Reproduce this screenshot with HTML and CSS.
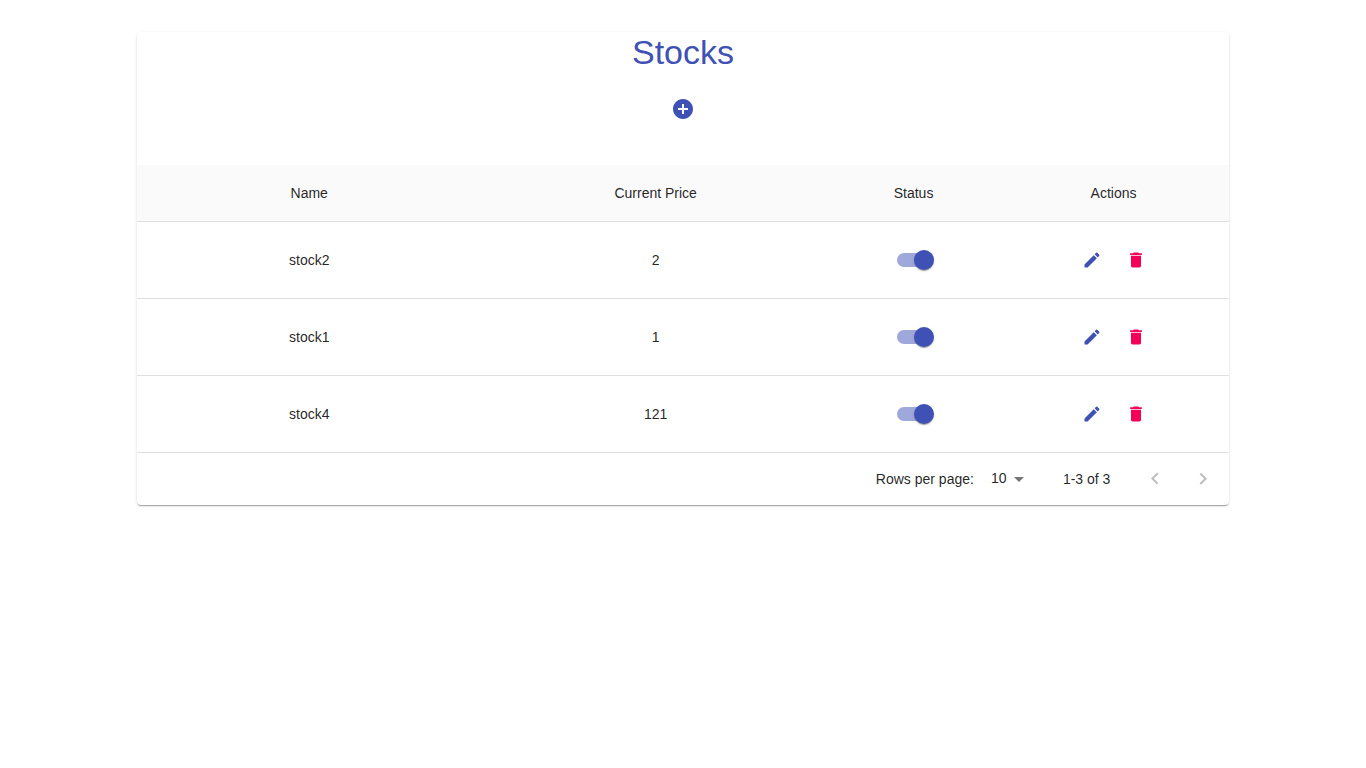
FILE: index.html
```html
<!DOCTYPE html>
<html lang="en">
<head>
<meta charset="utf-8">
<meta name="viewport" content="width=device-width, initial-scale=1">
<title>Stocks</title>
<link rel="stylesheet" href="styles.css">
</head>
<body>
<svg class="sprite" aria-hidden="true">
  <symbol id="icon-add" viewBox="0 0 24 24"><path d="M12 2C6.48 2 2 6.48 2 12s4.48 10 10 10 10-4.48 10-10S17.52 2 12 2zm5 11h-4v4h-2v-4H7v-2h4V7h2v4h4v2z"/></symbol>
  <symbol id="icon-edit" viewBox="0 0 24 24"><path d="M3 17.25V21h3.75L17.81 9.94l-3.75-3.75L3 17.25zM20.71 7.04c.39-.39.39-1.02 0-1.41l-2.34-2.34a.9959.9959 0 00-1.41 0l-1.83 1.83 3.75 3.75 1.83-1.83z"/></symbol>
  <symbol id="icon-delete" viewBox="0 0 24 24"><path d="M6 19c0 1.1.9 2 2 2h8c1.1 0 2-.9 2-2V7H6v12zM19 4h-3.5l-1-1h-5l-1 1H5v2h14V4z"/></symbol>
  <symbol id="icon-down" viewBox="0 0 24 24"><path d="M7 10l5 5 5-5z"/></symbol>
  <symbol id="icon-prev" viewBox="0 0 24 24"><path d="M15.41 16.09l-4.58-4.59 4.58-4.59L14 5.5l-6 6 6 6z"/></symbol>
  <symbol id="icon-next" viewBox="0 0 24 24"><path d="M8.59 16.34l4.58-4.59-4.58-4.59L10 5.75l6 6-6 6z"/></symbol>
</svg>
<main class="card">
  <header class="card-header">
    <h1 class="title">Stocks</h1>
    <button class="icon-button primary" type="button" aria-label="Add stock"><svg class="icon"><use href="#icon-add"/></svg></button>
  </header>
  <table class="stocks">
    <colgroup><col class="col-name"><col class="col-price"><col class="col-status"><col class="col-actions"></colgroup>
    <thead>
      <tr><th scope="col">Name</th><th scope="col">Current Price</th><th scope="col">Status</th><th scope="col">Actions</th></tr>
    </thead>
    <tbody>
      <tr>
        <td>stock2</td><td>2</td>
        <td><label class="switch"><input class="switch-input" type="checkbox" aria-label="stock2 status" checked></label></td>
        <td><div class="actions">
          <button class="icon-button primary" type="button" aria-label="Edit stock2"><svg class="icon small"><use href="#icon-edit"/></svg></button>
          <button class="icon-button secondary" type="button" aria-label="Delete stock2"><svg class="icon small"><use href="#icon-delete"/></svg></button>
        </div></td>
      </tr>
      <tr>
        <td>stock1</td><td>1</td>
        <td><label class="switch"><input class="switch-input" type="checkbox" aria-label="stock1 status" checked></label></td>
        <td><div class="actions">
          <button class="icon-button primary" type="button" aria-label="Edit stock1"><svg class="icon small"><use href="#icon-edit"/></svg></button>
          <button class="icon-button secondary" type="button" aria-label="Delete stock1"><svg class="icon small"><use href="#icon-delete"/></svg></button>
        </div></td>
      </tr>
      <tr>
        <td>stock4</td><td>121</td>
        <td><label class="switch"><input class="switch-input" type="checkbox" aria-label="stock4 status" checked></label></td>
        <td><div class="actions">
          <button class="icon-button primary" type="button" aria-label="Edit stock4"><svg class="icon small"><use href="#icon-edit"/></svg></button>
          <button class="icon-button secondary" type="button" aria-label="Delete stock4"><svg class="icon small"><use href="#icon-delete"/></svg></button>
        </div></td>
      </tr>
    </tbody>
  </table>
  <footer class="pagination">
    <label for="rows">Rows per page:</label>
    <div class="select-wrap">
      <select class="select" id="rows"><option>10</option><option>25</option></select>
      <svg class="icon select-arrow"><use href="#icon-down"/></svg>
    </div>
    <span class="range">1-3 of 3</span>
    <button class="icon-button" type="button" aria-label="Previous page" disabled><svg class="icon"><use href="#icon-prev"/></svg></button>
    <button class="icon-button" type="button" aria-label="Next page" disabled><svg class="icon"><use href="#icon-next"/></svg></button>
  </footer>
</main>
</body>
</html>
```
FILE: styles.css
```css
*, *::before, *::after { box-sizing: border-box; }

body {
  margin: 0;
  background: #fff;
  color: rgba(0, 0, 0, 0.87);
  font-family: "Liberation Sans", Arial, sans-serif;
  font-size: 14px;
  line-height: 20px;
}

.sprite { display: none; }

.card {
  width: 80%;
  margin: 32px auto;
  border-radius: 4px;
  background: #fff;
  box-shadow: 0 2px 1px -1px rgba(0, 0, 0, 0.2), 0 1px 1px 0 rgba(0, 0, 0, 0.14), 0 1px 3px 0 rgba(0, 0, 0, 0.12);
}

.card-header {
  display: flex;
  flex-direction: column;
  align-items: center;
  gap: 13px;
  padding-bottom: 32px;
}

.title {
  margin: 0;
  color: #3f51b5;
  font-size: 34px;
  font-weight: 400;
  line-height: 40px;
}

.icon-button {
  display: flex;
  padding: 12px;
  border: 0;
  border-radius: 50%;
  background: none;
  cursor: pointer;
  color: inherit;
}
.icon-button.primary { color: #3f51b5; }
.icon-button.secondary { color: #f50057; }
.icon-button:disabled { color: rgba(0, 0, 0, 0.26); cursor: default; }

.icon { width: 24px; height: 24px; fill: currentColor; }
.icon.small { width: 20px; height: 20px; }

.stocks {
  width: 100%;
  table-layout: fixed;
  border-collapse: separate;
  border-spacing: 0;
}
.col-name { width: 31.6%; }
.col-price { width: 31.8%; }
.col-status { width: 15.4%; }
.col-actions { width: 21.2%; }

.stocks th, .stocks td {
  padding: 16px;
  border-bottom: 1px solid #e0e0e0;
  font-weight: 400;
  text-align: center;
  vertical-align: middle;
}
.stocks th {
  padding: 18px 16px;
  background: #fafafa;
}

.actions { display: flex; justify-content: center; }

.switch {
  display: flex;
  width: 58px;
  height: 38px;
  margin: 0 auto;
  align-items: center;
  justify-content: center;
  cursor: pointer;
}
.switch-input {
  appearance: none;
  position: relative;
  width: 34px;
  height: 14px;
  margin: 0;
  border-radius: 7px;
  background: #bdbdbd;
  cursor: pointer;
}
.switch-input::after {
  content: "";
  position: absolute;
  top: -3px;
  left: -3px;
  width: 20px;
  height: 20px;
  border-radius: 50%;
  background: #fafafa;
  box-shadow: 0 2px 1px -1px rgba(0, 0, 0, 0.2), 0 1px 1px 0 rgba(0, 0, 0, 0.14), 0 1px 3px 0 rgba(0, 0, 0, 0.12);
}
.switch-input:checked { background: #9fa8da; }
.switch-input:checked::after { left: 17px; background: #3f51b5; }

.pagination {
  display: flex;
  align-items: center;
  justify-content: flex-end;
  height: 52px;
  padding-right: 2px;
}
.select-wrap {
  position: relative;
  margin: 0 32px 0 9px;
}
.select {
  display: block;
  appearance: none;
  width: 48px;
  height: 24px;
  padding: 0 24px 2px 8px;
  border: 0;
  background: none;
  color: inherit;
  font: inherit;
  cursor: pointer;
}
.select-arrow {
  position: absolute;
  top: 0;
  right: 0;
  color: rgba(0, 0, 0, 0.54);
  pointer-events: none;
}
.range { margin-right: 21px; }
```
